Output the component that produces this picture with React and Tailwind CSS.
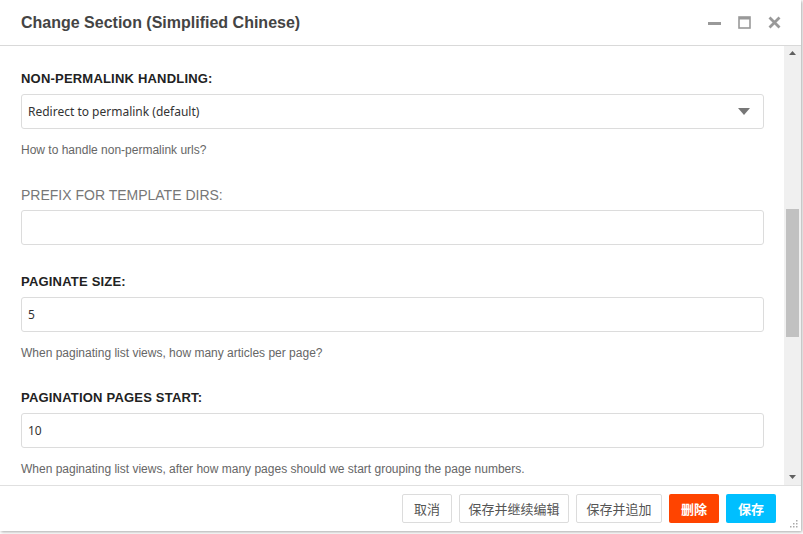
const FONT = { fontFamily: '"Liberation Sans", Arial, sans-serif' };
const CJK = { fontFamily: '"Noto Sans CJK SC", "Noto Sans", sans-serif' };

function Label({ children, muted }) {
  return (
    <div
      className={`text-[13px] leading-[18px] mb-[6px] ${muted ? 'text-[#777] uppercase' : 'font-bold text-[#222] tracking-[0.2px]'}`}
      style={muted ? { ...FONT, fontSize: 14 } : FONT}
    >
      {children}
    </div>
  );
}

function Help({ children }) {
  return (
    <div className="mt-[13px] text-[12px] leading-[16px] text-[#666]" style={FONT}>
      {children}
    </div>
  );
}

function TextInput({ value }) {
  return (
    <div
      className="h-[35px] border border-[#dcdcdc] rounded-[3px] bg-white flex items-center px-[6px] text-[12px] text-[#333]"
      style={{ fontFamily: '"Noto Sans", sans-serif' }}
    >
      {value}
    </div>
  );
}

export default function App() {
  return (
    <div className="w-[803px] h-[534px] bg-white relative overflow-hidden">
      <div className="absolute left-0 top-0 w-[801px] h-[531px] bg-white flex flex-col shadow-[1px_1px_3px_rgba(0,0,0,0.35)]">
        {/* title bar */}
        <div className="h-[46px] shrink-0 flex items-center justify-between pl-[21px] pr-[20px] border-b border-[#d9d9d9]">
          <div className="text-[16px] font-bold text-[#444]" style={FONT}>
            Change Section (Simplified Chinese)
          </div>
          <div className="flex items-center gap-[17px]">
            <svg width="13" height="13" viewBox="0 0 13 13">
              <rect x="0" y="6" width="13" height="3" fill="#999" />
            </svg>
            <svg width="13" height="13" viewBox="0 0 13 13">
              <rect x="1" y="1" width="11" height="11" fill="none" stroke="#999" strokeWidth="1.6" />
              <rect x="1" y="1" width="11" height="2.5" fill="#999" />
            </svg>
            <svg width="13" height="13" viewBox="0 0 13 13">
              <path d="M1.5 1.5 L11.5 11.5 M11.5 1.5 L1.5 11.5" stroke="#999" strokeWidth="2.8" />
            </svg>
          </div>
        </div>

        {/* body */}
        <div className="flex flex-1 min-h-0">
          <div className="flex-1 pl-[21px] pr-[20px] pt-[24px] overflow-hidden">
            <div className="mb-[28px]">
              <Label>NON-PERMALINK HANDLING:</Label>
              <div
                className="h-[35px] border border-[#dcdcdc] rounded-[3px] bg-white flex items-center justify-between px-[6px] text-[12px] text-[#333]"
                style={{ fontFamily: '"Noto Sans", sans-serif' }}
              >
                <span>Redirect to permalink (default)</span>
                <svg width="12" height="7" viewBox="0 0 12 7" className="mr-[7px]">
                  <path d="M0 0 L12 0 L6 7 Z" fill="#777" />
                </svg>
              </div>
              <Help>How to handle non-permalink urls?</Help>
            </div>

            <div className="mb-[28px]">
              <Label muted>PREFIX FOR TEMPLATE DIRS:</Label>
              <TextInput value="" />
            </div>

            <div className="mb-[28px]">
              <Label>PAGINATE SIZE:</Label>
              <TextInput value="5" />
              <Help>When paginating list views, how many articles per page?</Help>
            </div>

            <div className="mb-[28px]">
              <Label>PAGINATION PAGES START:</Label>
              <TextInput value="10" />
              <Help>When paginating list views, after how many pages should we start grouping the page numbers.</Help>
            </div>
          </div>

          {/* scrollbar */}
          <div className="w-[17px] shrink-0 bg-[#f0f0f0] flex flex-col items-center">
            <div className="h-[14px] flex items-center justify-center">
              <svg width="7" height="4" viewBox="0 0 7 4">
                <path d="M0 4 L7 4 L3.5 0 Z" fill="#606060" />
              </svg>
            </div>
            <div className="h-[149px]" />
            <div className="w-[13px] h-[128px] bg-[#c1c1c1]" />
            <div className="flex-1" />
            <div className="h-[16px] flex items-center justify-center">
              <svg width="7" height="4" viewBox="0 0 7 4">
                <path d="M0 0 L7 0 L3.5 4 Z" fill="#606060" />
              </svg>
            </div>
          </div>
        </div>

        {/* footer */}
        <div className="h-[46px] shrink-0 border-t border-[#e0e0e0] flex items-center justify-end gap-[7px] pr-[25px] relative" style={CJK}>
          <button className="h-[29px] w-[50px] border border-[#dcdcdc] rounded-[2px] bg-white text-[13px] text-[#555]">取消</button>
          <button className="h-[29px] w-[110px] border border-[#dcdcdc] rounded-[2px] bg-white text-[13px] text-[#555]">保存并继续编辑</button>
          <button className="h-[29px] w-[86px] border border-[#dcdcdc] rounded-[2px] bg-white text-[13px] text-[#555]">保存并追加</button>
          <button className="h-[29px] w-[50px] rounded-[2px] bg-[#ff4400] text-[13px] text-white font-bold">删除</button>
          <button className="h-[29px] w-[50px] rounded-[2px] bg-[#00bfff] text-[13px] text-white font-bold">保存</button>
          <svg width="9" height="9" viewBox="0 0 9 9" className="absolute right-[3px] bottom-[3px]">
            <rect x="7" y="1" width="1.5" height="1.5" fill="#aaa" />
            <rect x="4" y="4" width="1.5" height="1.5" fill="#aaa" />
            <rect x="7" y="4" width="1.5" height="1.5" fill="#aaa" />
            <rect x="1" y="7" width="1.5" height="1.5" fill="#aaa" />
            <rect x="4" y="7" width="1.5" height="1.5" fill="#aaa" />
            <rect x="7" y="7" width="1.5" height="1.5" fill="#aaa" />
          </svg>
        </div>
      </div>
    </div>
  );
}
